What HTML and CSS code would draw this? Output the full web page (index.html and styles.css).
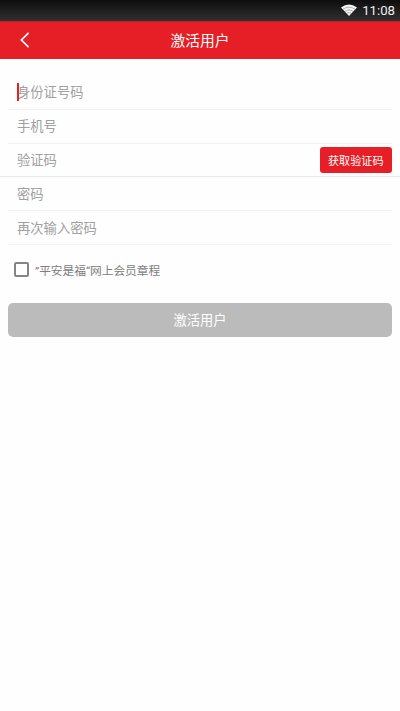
FILE: index.html
```html
<!DOCTYPE html>
<html lang="zh-CN">
<head>
<meta charset="utf-8">
<title>激活用户</title>
<link rel="stylesheet" href="styles.css">
</head>
<body>
<div class="status">
  <svg class="wifi" width="16" height="12" viewBox="0 0 16 12">
    <path d="M0 3.4Q8-2.6 16 3.4L8 12Z" fill="#f4f4f4"/>
    <path d="M1.8 5.4Q8 .8 14.2 5.4M3.8 7.5Q8 4.4 12.2 7.5M5.6 9.4Q8 7.6 10.4 9.4" fill="none" stroke="#888" stroke-width=".6"/>
  </svg>
  <span>11:08</span>
</div>
<header class="bar">
  <svg class="back" width="10" height="16" viewBox="0 0 10 16"><path d="M8.6 .8L1.4 8L8.6 15.2" fill="none" stroke="#fff" stroke-width="1.7"/></svg>
  <h1>激活用户</h1>
</header>
<main>
  <div class="field"><span class="caret"></span>身份证号码</div>
  <div class="field">手机号</div>
  <div class="field code"><span>验证码</span><button class="get">获取验证码</button></div>
  <div class="field">密码</div>
  <div class="field">再次输入密码</div>
  <label class="agree"><span class="box"></span><span>”平安是福“网上会员章程</span></label>
  <button class="submit">激活用户</button>
</main>
</body>
</html>
```

FILE: styles.css
```css
* { box-sizing: border-box; }
body {
  margin: 0;
  height: 711px;
  overflow: hidden;
  background: #fefefe;
  font-family: Roboto, "Noto Sans CJK SC", sans-serif;
}
.status {
  height: 21px;
  padding: 1px 5px 0 0;
  display: flex;
  align-items: center;
  justify-content: flex-end;
  gap: 5px;
  background: linear-gradient(#0e0e0e, #303030);
  color: #eee;
  font-size: 13.2px;
  line-height: 20px;
}
.wifi { display: block; margin-top: -2px; }
.bar {
  height: 38px;
  padding-bottom: 1px;
  display: grid;
  grid-template-columns: 50px 1fr 50px;
  align-items: center;
  background: #e61e25;
  border-top: 1px solid #c31c20;
}
.back { display: block; margin-left: 20px; }
.bar h1 {
  margin: 0;
  padding-top: 2px;
  color: #fff;
  font-size: 14.8px;
  font-weight: 400;
  line-height: 22px;
  text-align: center;
}
main { padding: 17px 8px 0; }
.field {
  position: relative;
  height: 33.8px;
  padding: 2px 9px 0;
  display: flex;
  align-items: center;
  border-bottom: 1px solid #f3f3f3;
  color: #a0a0a0;
  font-size: 13.3px;
  line-height: 20px;
}
.caret {
  position: absolute;
  left: 8.5px;
  top: 7px;
  width: 2px;
  height: 18px;
  background: #e61e25;
}
.code {
  margin: 0 -8px;
  padding: 2px 8px 0 17px;
  justify-content: space-between;
  border-bottom-color: #e9e9e9;
}
button {
  border: 0;
  padding: 0;
  color: #fff;
  font-family: inherit;
}
.get {
  width: 72.5px;
  height: 26px;
  margin-top: -2px;
  border-radius: 3px;
  background: #e61e25;
  font-size: 11.1px;
}
.agree {
  height: 50px;
  padding-left: 6px;
  display: flex;
  align-items: center;
  gap: 6px;
  color: #7c7c7c;
  font-size: 11.7px;
}
.box {
  width: 15px;
  height: 15px;
  border: 2px solid #858585;
  border-radius: 2px;
}
.submit {
  display: block;
  width: 100%;
  height: 34px;
  margin-top: 8px;
  border-radius: 5px;
  background: #bbb;
  font-size: 13.3px;
}
```
